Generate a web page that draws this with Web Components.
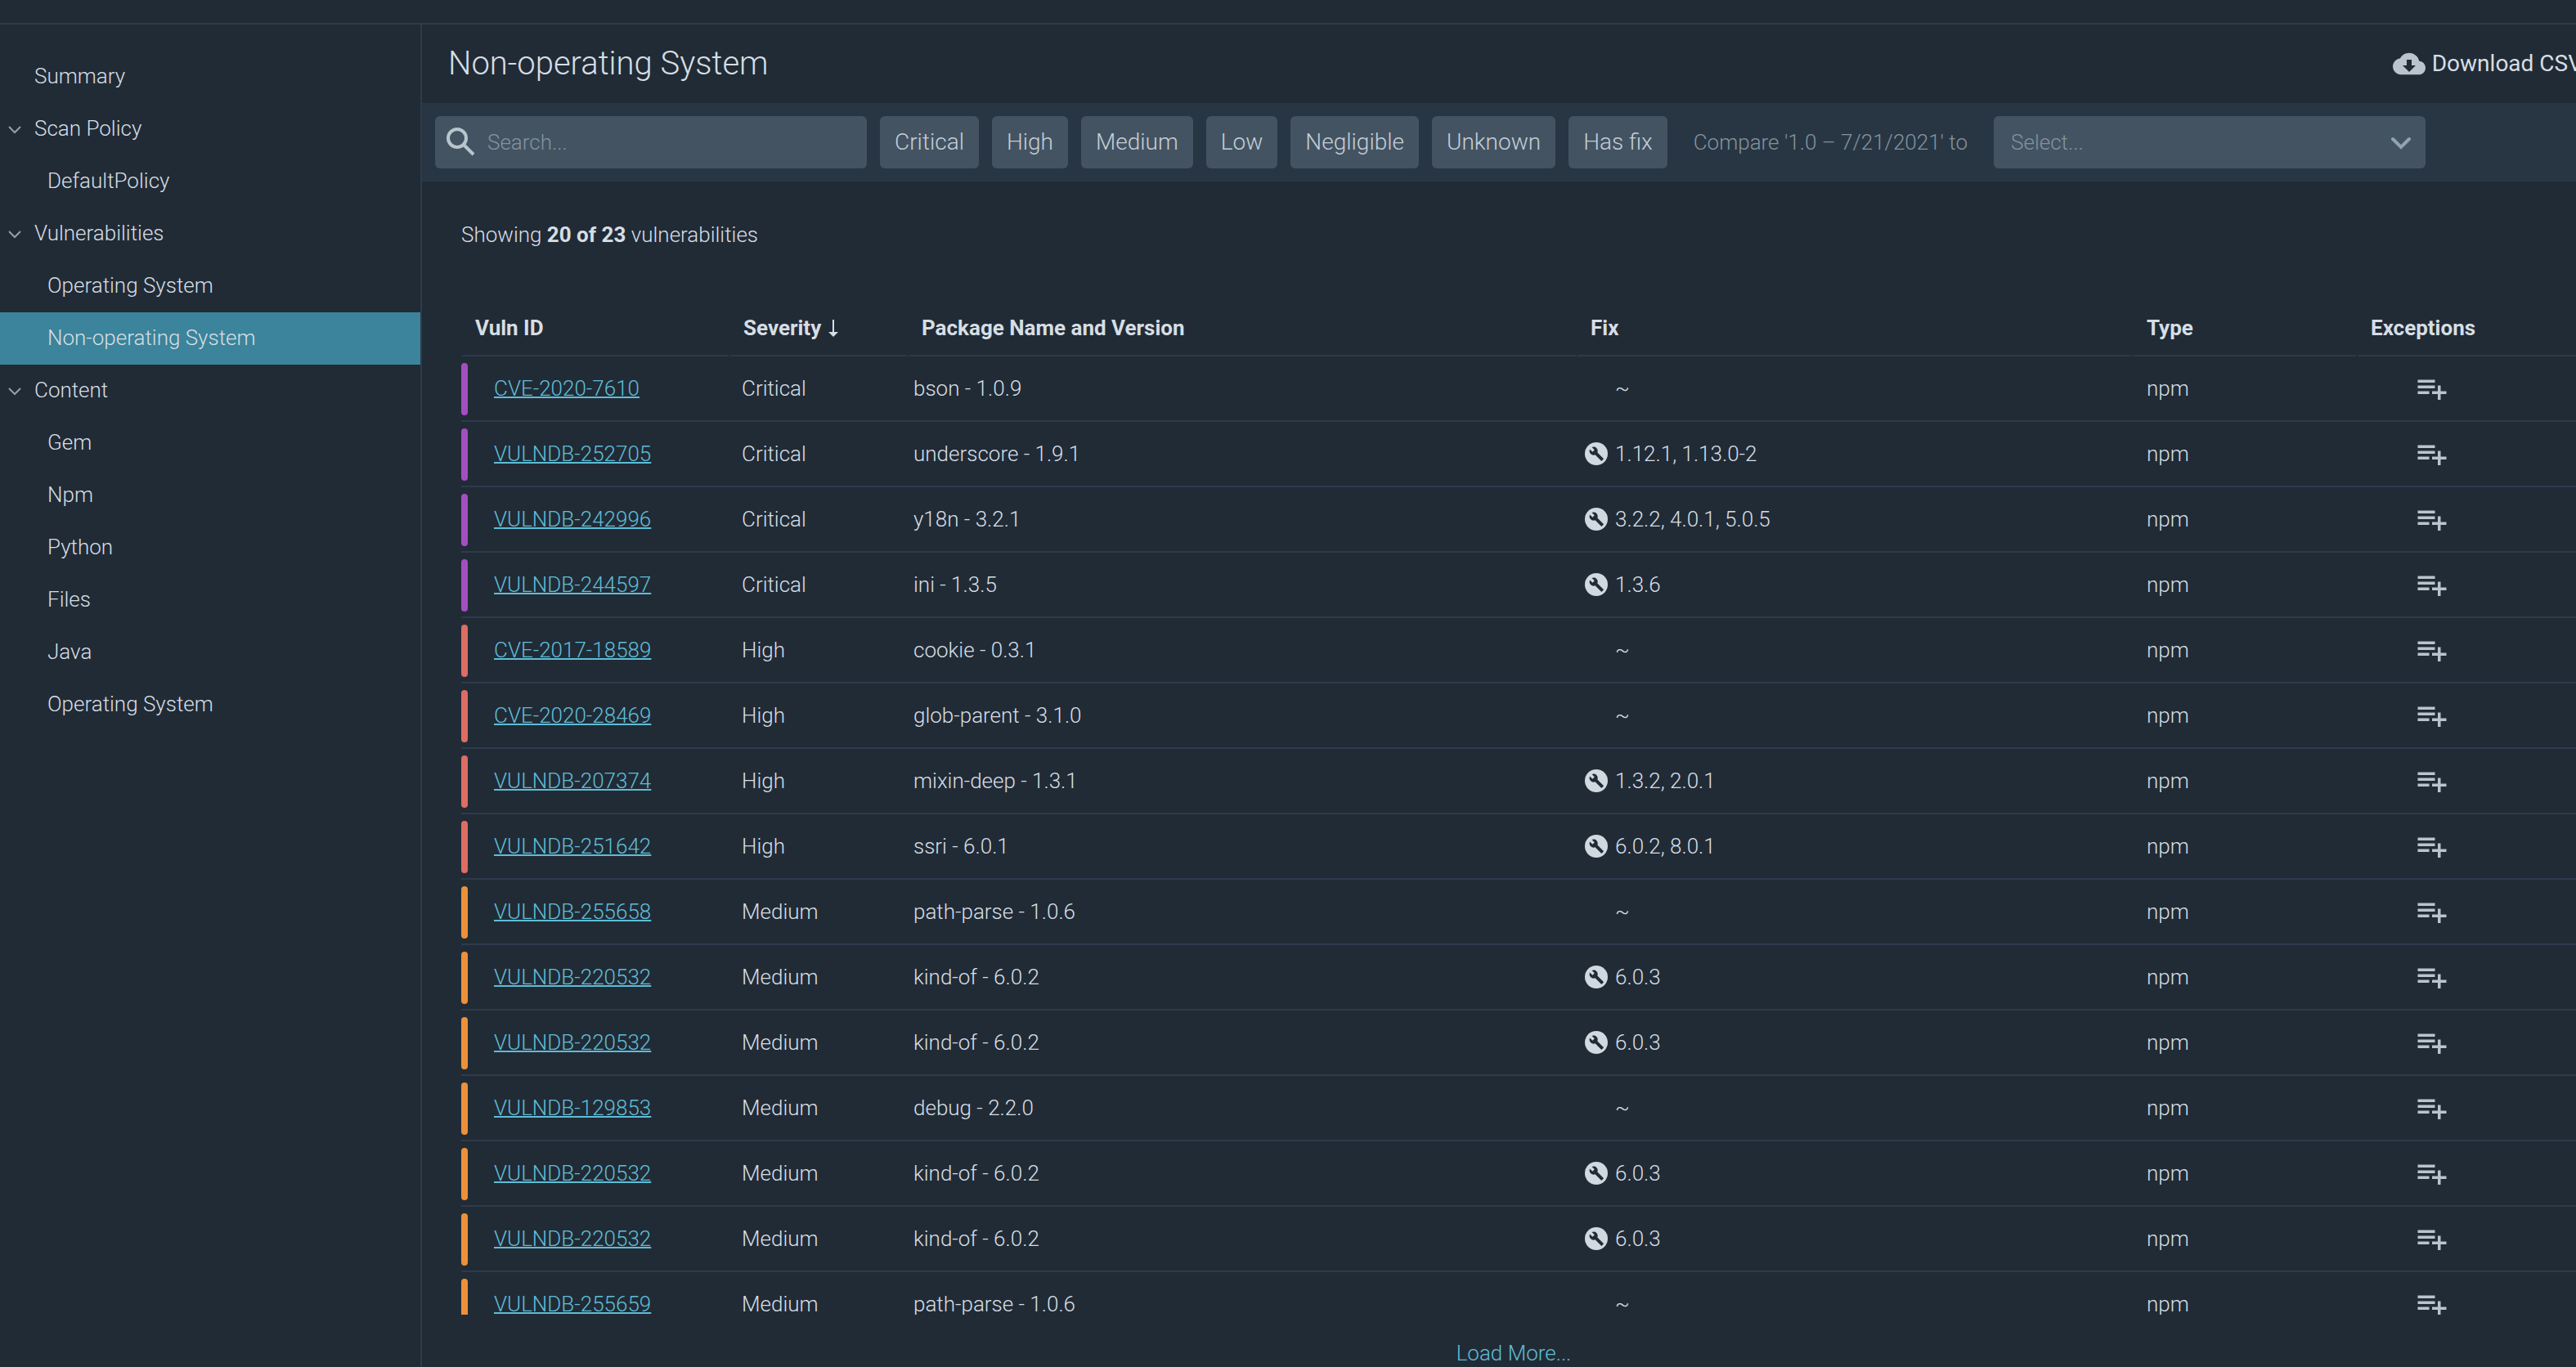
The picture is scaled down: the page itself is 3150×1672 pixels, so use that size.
<!DOCTYPE html>
<html lang="en">
<head>
<meta charset="utf-8">
<title>Non-operating System vulnerabilities</title>
<style>
  html, body { margin: 0; height: 100%; }
  body {
    overflow: hidden;
    background: #212b36;
    color: #d6dee4;
    font: 300 26px/32px Roboto, sans-serif;
    --line: #2e3b4c;
    --bar: #283643;
    --field: #445362;
    --muted: #82929e;
    --icon: #b8c5cc;
    --link: #5fbdd6;
    --active: #3b849b;
    --critical: #a34fc0;
    --high: #de6d63;
    --medium: #ec9139;
  }
</style>
</head>
<body>
<app-shell>
  <side-nav slot="nav">
    <nav-item>Summary</nav-item>
    <nav-item group>Scan Policy</nav-item>
    <nav-item child>DefaultPolicy</nav-item>
    <nav-item group>Vulnerabilities</nav-item>
    <nav-item child>Operating System</nav-item>
    <nav-item child active>Non-operating System</nav-item>
    <nav-item group>Content</nav-item>
    <nav-item child>Gem</nav-item>
    <nav-item child>Npm</nav-item>
    <nav-item child>Python</nav-item>
    <nav-item child>Files</nav-item>
    <nav-item child>Java</nav-item>
    <nav-item child>Operating System</nav-item>
  </side-nav>
  <page-header>Non-operating System</page-header>
  <filter-bar>
    <filter-chip>Critical</filter-chip>
    <filter-chip>High</filter-chip>
    <filter-chip>Medium</filter-chip>
    <filter-chip>Low</filter-chip>
    <filter-chip>Negligible</filter-chip>
    <filter-chip>Unknown</filter-chip>
    <filter-chip>Has fix</filter-chip>
  </filter-bar>
  <vuln-list></vuln-list>
</app-shell>

<script>
const define = (name, html, setup) => customElements.define(name, class extends HTMLElement {
  connectedCallback() {
    if (this.shadowRoot) return;
    this.attachShadow({ mode: 'open' }).innerHTML = html;
    if (setup) setup(this, this.shadowRoot);
  }
});

define('app-shell', `
  <style>
    :host { display: flex; flex-direction: column; height: 100vh; width: calc(100% + 36px); }
    .top { flex: none; height: 28px; border-bottom: 2px solid var(--line); }
    .body { flex: 1; min-height: 0; display: flex; }
    main { flex: 1; min-width: 0; display: flex; flex-direction: column; }
  </style>
  <div class="top"></div>
  <div class="body"><slot name="nav"></slot><main><slot></slot></main></div>
`);

define('side-nav', `
  <style>
    :host { display: block; flex: none; width: 514px; border-right: 2px solid var(--line); }
    nav { display: flex; flex-direction: column; padding-top: 32px; }
  </style>
  <nav><slot></slot></nav>
`);

define('nav-item', `
  <style>
    :host { display: block; }
    a { display: flex; align-items: center; box-sizing: border-box; height: 64px; padding: 0 0 2px 42px; color: inherit; text-decoration: none; }
    :host([child]) a { padding-left: 58px; }
    :host([group]) a { padding-left: 8px; gap: 14px; }
    :host([active]) a { background: var(--active); }
    svg { display: none; width: 20px; height: 20px; fill: none; stroke: #90a1ad; stroke-width: 2; }
    :host([group]) svg { display: block; }
  </style>
  <a href="#"><svg viewBox="0 0 20 20"><path d="M3 8l7 7 7-7"/></svg><slot></slot></a>
`, (host, root) => { if (host.hasAttribute('active')) root.querySelector('a').setAttribute('aria-current', 'page'); });

define('page-header', `
  <style>
    :host { display: flex; flex: none; align-items: center; justify-content: space-between; height: 96px; padding: 0 28px 0 32px; }
    h1 { margin: 0; font: 300 40px/48px Roboto, sans-serif; }
    button { display: flex; align-items: center; gap: 8px; padding: 0; border: 0; background: none; color: inherit; font: 400 28px/32px Roboto, sans-serif; white-space: nowrap; }
    svg { width: 40px; height: 40px; fill: var(--icon); }
  </style>
  <h1><slot></slot></h1>
  <button type="button"><svg viewBox="0 0 24 24"><path d="M19.35 10.04C18.67 6.59 15.64 4 12 4 9.11 4 6.6 5.64 5.35 8.04 2.34 8.36 0 10.91 0 14c0 3.31 2.69 6 6 6h13c2.76 0 5-2.24 5-5 0-2.64-2.05-4.78-4.65-4.96z"/><path fill="#212b36" d="M10.200 9h3.600v4.200h3L12 18l-4.800-4.800h3z"/></svg>Download CSV</button>
`);

define('filter-bar', `
  <style>
    :host { display: flex; flex: none; align-items: center; gap: 16px; height: 96px; padding: 0 16px; background: var(--bar); }
    .search, .select { box-sizing: border-box; width: 528px; height: 64px; border-radius: 6px; background: var(--field); }
    .search { display: flex; align-items: center; padding-left: 12px; gap: 14px; }
    .search svg { width: 38px; height: 38px; fill: none; stroke: var(--icon); stroke-width: 4; }
    input { flex: 1; min-width: 0; padding: 0; border: 0; outline: 0; background: none; color: inherit; font: inherit; }
    input::placeholder { color: var(--muted); opacity: 1; }
    label { padding: 0 16px; color: var(--muted); white-space: nowrap; }
    .select { display: grid; grid-template: 1fr / 1fr; align-items: center; }
    select, .select svg { grid-area: 1 / 1; }
    select { appearance: none; height: 64px; padding: 0 21px; border: 0; background: none; color: var(--muted); font: inherit; }
    .select svg { justify-self: end; width: 24px; height: 24px; margin-right: 18px; fill: none; stroke: #90a3b0; stroke-width: 4; stroke-linecap: round; pointer-events: none; }
  </style>
  <div class="search">
    <svg viewBox="0 0 38 38"><circle cx="15" cy="14" r="11"/><path d="M23 22l12 12"/></svg>
    <input type="text" placeholder="Search..." aria-label="Search">
  </div>
  <slot></slot>
  <label for="compare">Compare '1.0 – 7/21/2021' to</label>
  <div class="select">
    <select id="compare"><option>Select...</option></select>
    <svg viewBox="0 0 24 24"><path d="M2 8l10 10L22 8"/></svg>
  </div>
`);

define('filter-chip', `
  <style>
    :host { display: block; flex: none; }
    button { height: 64px; padding: 0 18px; border: 0; border-radius: 6px; background: var(--field); color: #c3ced6; font: 300 28px/32px Roboto, sans-serif; white-space: nowrap; }
  </style>
  <button type="button"><slot></slot></button>
`);

const rows = [
  ['CVE-2020-7610', 'Critical', 'bson - 1.0.9', ''],
  ['VULNDB-252705', 'Critical', 'underscore - 1.9.1', '1.12.1, 1.13.0-2'],
  ['VULNDB-242996', 'Critical', 'y18n - 3.2.1', '3.2.2, 4.0.1, 5.0.5'],
  ['VULNDB-244597', 'Critical', 'ini - 1.3.5', '1.3.6'],
  ['CVE-2017-18589', 'High', 'cookie - 0.3.1', ''],
  ['CVE-2020-28469', 'High', 'glob-parent - 3.1.0', ''],
  ['VULNDB-207374', 'High', 'mixin-deep - 1.3.1', '1.3.2, 2.0.1'],
  ['VULNDB-251642', 'High', 'ssri - 6.0.1', '6.0.2, 8.0.1'],
  ['VULNDB-255658', 'Medium', 'path-parse - 1.0.6', ''],
  ['VULNDB-220532', 'Medium', 'kind-of - 6.0.2', '6.0.3'],
  ['VULNDB-220532', 'Medium', 'kind-of - 6.0.2', '6.0.3'],
  ['VULNDB-129853', 'Medium', 'debug - 2.2.0', ''],
  ['VULNDB-220532', 'Medium', 'kind-of - 6.0.2', '6.0.3'],
  ['VULNDB-220532', 'Medium', 'kind-of - 6.0.2', '6.0.3'],
  ['VULNDB-255659', 'Medium', 'path-parse - 1.0.6', '']
];
const wrench = '<svg viewBox="0 0 24 24"><circle cx="12" cy="12" r="12" fill="#d1d9e0"/><path fill="#212b36" d="M19.4 16.9l-6.2-6.2c.6-1.6.3-3.4-1-4.7-1.300-1.300-3.300-1.600-4.900-.8l2.800 2.800-2 2-2.900-2.800c-.7 1.500-.4 3.500.9 4.900 1.300 1.300 3.100 1.600 4.700 1l6.200 6.200c.3.300.7.300.9 0l1.500-1.500c.3-.2.3-.7 0-.9z"/></svg>';
const row = ([id, severity, name, fix]) => `
  <tr class="${severity.toLowerCase()}">
    <td class="id"><div><i></i><a href="#">${id}</a></div></td>
    <td class="sev">${severity}</td>
    <td class="pkg">${name}</td>
    <td class="fix"><div>${fix ? wrench : '<b></b>'}<span>${fix || '~'}</span></div></td>
    <td class="type">npm</td>
    <td class="exc"><button type="button" aria-label="Add exception"><svg viewBox="0 0 24 24"><path d="M14 10H2v2h12v-2zm0-4H2v2h12V6zm4 8v-4h-2v4h-4v2h4v4h2v-4h4v-2h-4zM2 16h8v-2H2v2z"/></svg></button></td>
  </tr>`;

define('vuln-list', `
  <style>
    :host { display: flex; flex: 1; min-height: 0; flex-direction: column; }
    p { flex: none; margin: 0; padding: 49px 48px 63px; }
    strong { font-weight: 700; }
    .clip { flex: 1; min-height: 0; overflow: hidden; margin: 0 32px 0 48px; }
    table { width: 100%; table-layout: fixed; border-collapse: separate; border-spacing: 0; line-height: 24px; }
    tr { height: 80px; }
    thead tr { height: 70px; }
    th, td { box-sizing: border-box; height: inherit; padding: 0; text-align: left; white-space: nowrap; border-bottom: 2px solid var(--line); }
    th { padding: 2px 0 0 15px; font-weight: 700; border-left: 2px solid transparent; border-right: 2px solid transparent; }
    th svg { width: 14px; height: 24px; margin-left: 8px; vertical-align: -4px; fill: none; stroke: currentColor; stroke-width: 2; }
    .id > div { display: flex; align-items: center; height: 78px; gap: 32px; }
    i { align-self: flex-start; width: 8px; height: 64px; margin-top: 8px; border-radius: 4px; background: var(--tone); }
    .critical { --tone: var(--critical); }
    .high { --tone: var(--high); }
    .medium { --tone: var(--medium); }
    a { color: var(--link); text-decoration-thickness: 2px; }
    .sev { padding-left: 15px; }
    .pkg { padding-left: 7px; }
    .fix { padding-left: 10px; }
    .fix div { display: flex; align-items: center; gap: 9px; }
    .fix svg, b { width: 28px; height: 28px; }
    .type { padding-left: 17px; }
    .exc { padding-left: 71px; }
    button { display: block; padding: 0; border: 0; background: none; font: inherit; }
    .exc svg { display: block; width: 42px; height: 42px; fill: var(--icon); }
    footer { flex: none; display: flex; justify-content: center; padding: 31px 0 1px; }
    footer button { color: var(--link); }
  </style>
  <p>Showing <strong>20 of 23</strong> vulnerabilities</p>
  <div class="clip">
    <table>
      <colgroup><col style="width:328px"><col style="width:218px"><col style="width:818px"><col style="width:680px"><col style="width:274px"><col></colgroup>
      <thead><tr><th>Vuln ID</th><th>Severity<svg viewBox="0 0 14 24"><path d="M7 1v18"/><path d="M1 16l6 6 6-6z" fill="currentColor" stroke="none"/></svg></th><th>Package Name and Version</th><th>Fix</th><th>Type</th><th>Exceptions</th></tr></thead>
      <tbody>${rows.map(row).join('')}</tbody>
    </table>
  </div>
  <footer><button type="button">Load More...</button></footer>
`);
</script>
</body>
</html>
